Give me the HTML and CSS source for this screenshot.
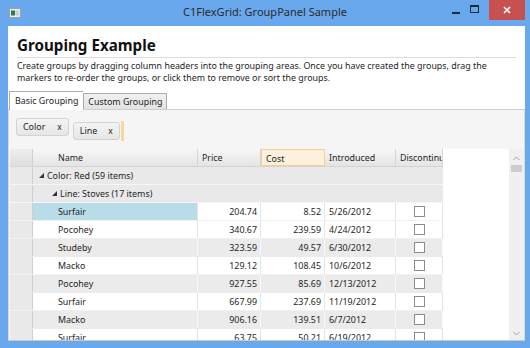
FILE: index.html
```html
<!DOCTYPE html>
<html lang="en">
<head>
<meta charset="UTF-8">
<title>C1FlexGrid: GroupPanel Sample</title>
<link rel="stylesheet" href="styles.css">
</head>
<body>
<div class="window">
    <div class="titlebar">
        <div class="tb-left">
            <svg class="app-icon" width="12" height="10" viewBox="0 0 12 10">
                <rect x="0.5" y="0.5" width="11" height="9" fill="#e9ecef" stroke="#9aa3ad"/>
                <rect x="2" y="2.5" width="4" height="5" fill="#2f7a4c"/>
                <rect x="6.5" y="2.5" width="3.5" height="5" fill="#c9ced4"/>
            </svg>
        </div>
        <div class="title">C1FlexGrid: GroupPanel Sample</div>
        <div class="caption-buttons">
            <span class="btn btn-min"><span class="dash"></span></span>
            <span class="btn btn-max"><span class="box"></span></span>
            <span class="btn btn-close">
                <svg width="8" height="8" viewBox="0 0 8 8"><path d="M1 1L7 7M7 1L1 7" stroke="#fff" stroke-width="1.6"/></svg>
            </span>
        </div>
    </div>

    <div class="client">
        <div class="intro">
            <h1>Grouping Example</h1>
            <p>Create groups by dragging column headers into the grouping areas. Once you have created the groups, drag the<br>markers to re-order the groups, or click them to remove or sort the groups.</p>
        </div>

        <div class="tabs">
            <div class="tab active">Basic Grouping</div>
            <div class="tab">Custom Grouping</div>
        </div>

        <div class="tab-panel">
            <div class="group-panel">
                <div class="chip">Color <span class="chip-x">x</span></div>
                <div class="chip lower">Line <span class="chip-x">x</span></div>
                <div class="drop-marker"></div>
            </div>

            <div class="grid-area">
                <div class="grid">
                    <div class="row head">
                        <div class="rh"></div>
                        <div class="cell name">Name</div>
                        <div class="cell">Price</div>
                        <div class="cell hot">Cost</div>
                        <div class="cell">Introduced</div>
                        <div class="cell clip">Discontinued</div>
                    </div>
                    <div class="row group">
                        <div class="rh"></div>
                        <div class="glabel lvl0"><span class="tri"></span>Color: Red (59 items)</div>
                    </div>
                    <div class="row group">
                        <div class="rh"></div>
                        <div class="glabel lvl1"><span class="tri"></span>Line: Stoves (17 items)</div>
                    </div>
                    <div class="row">
                        <div class="rh"></div>
                        <div class="cell name selected">Surfair</div>
                        <div class="cell num">204.74</div>
                        <div class="cell num">8.52</div>
                        <div class="cell">5/26/2012</div>
                        <div class="cell check"><span class="box"></span></div>
                    </div>
                    <div class="row">
                        <div class="rh"></div>
                        <div class="cell name">Pocohey</div>
                        <div class="cell num">340.67</div>
                        <div class="cell num">239.59</div>
                        <div class="cell">4/24/2012</div>
                        <div class="cell check"><span class="box"></span></div>
                    </div>
                    <div class="row alt">
                        <div class="rh"></div>
                        <div class="cell name">Studeby</div>
                        <div class="cell num">323.59</div>
                        <div class="cell num">49.57</div>
                        <div class="cell">6/30/2012</div>
                        <div class="cell check"><span class="box"></span></div>
                    </div>
                    <div class="row">
                        <div class="rh"></div>
                        <div class="cell name">Macko</div>
                        <div class="cell num">129.12</div>
                        <div class="cell num">108.45</div>
                        <div class="cell">10/6/2012</div>
                        <div class="cell check"><span class="box"></span></div>
                    </div>
                    <div class="row alt">
                        <div class="rh"></div>
                        <div class="cell name">Pocohey</div>
                        <div class="cell num">927.55</div>
                        <div class="cell num">85.69</div>
                        <div class="cell">12/13/2012</div>
                        <div class="cell check"><span class="box"></span></div>
                    </div>
                    <div class="row">
                        <div class="rh"></div>
                        <div class="cell name">Surfair</div>
                        <div class="cell num">667.99</div>
                        <div class="cell num">237.69</div>
                        <div class="cell">11/19/2012</div>
                        <div class="cell check"><span class="box"></span></div>
                    </div>
                    <div class="row alt">
                        <div class="rh"></div>
                        <div class="cell name">Macko</div>
                        <div class="cell num">906.16</div>
                        <div class="cell num">139.51</div>
                        <div class="cell">6/7/2012</div>
                        <div class="cell check"><span class="box"></span></div>
                    </div>
                    <div class="row">
                        <div class="rh"></div>
                        <div class="cell name">Surfair</div>
                        <div class="cell num">63.75</div>
                        <div class="cell num">50.21</div>
                        <div class="cell">6/19/2012</div>
                        <div class="cell check"><span class="box"></span></div>
                    </div>
                </div>
                <div class="filler"></div>
                <div class="scrollbar">
                    <svg class="arrow" width="7" height="5" viewBox="0 0 7 5"><path d="M0.5 4L3.5 1L6.5 4" fill="none" stroke="#a0a0a0"/></svg>
                    <div class="thumb"></div>
                    <div class="track"></div>
                    <svg class="arrow" width="7" height="5" viewBox="0 0 7 5"><path d="M0.5 1L3.5 4L6.5 1" fill="none" stroke="#a0a0a0"/></svg>
                </div>
            </div>
        </div>
    </div>
</div>
</body>
</html>
```

FILE: styles.css
```css
body, html {
    margin: 0;
    padding: 0;
    width: 530px;
    height: 348px;
    overflow: hidden;
    font-family: 'Noto Sans', 'Open Sans', sans-serif;
    color: #1e1e1e;
}
.window {
    display: flex;
    flex-direction: column;
    width: 530px;
    height: 348px;
    background-color: #6aa8ee;
}
/* title bar */
.titlebar {
    display: grid;
    grid-template-columns: 1fr auto 1fr;
    height: 26px;
    flex-shrink: 0;
}
.tb-left {
    padding: 8px 0 0 9px;
}
.app-icon {
    display: block;
}
.title {
    font-size: 11px;
    line-height: 24px;
    color: #2a2a2a;
}
.caption-buttons {
    display: flex;
    justify-content: flex-end;
    align-items: flex-start;
    padding-right: 5px;
}
.btn {
    display: flex;
    justify-content: center;
    align-items: center;
    height: 20px;
}
.btn-min {
    width: 18px;
}
.btn-min .dash {
    width: 8px;
    height: 2px;
    margin-top: 5px;
    background-color: #1e2a38;
}
.btn-max {
    width: 18px;
    margin-right: 6px;
}
.btn-max .box {
    width: 7px;
    height: 5px;
    margin-bottom: 3px;
    border: 1px solid #1e2a38;
    border-top-width: 2px;
}
.btn-close {
    width: 36px;
    background-color: #c75050;
}
/* client */
.client {
    flex: 1;
    display: flex;
    flex-direction: column;
    margin: 0 5px 7px 8px;
    background-color: #fff;
    min-height: 0;
}
.intro {
    padding: 9px 9px 0 9px;
}
.intro h1 {
    margin: 0;
    font-size: 15.2px;
    font-weight: bold;
    line-height: 21px;
    padding-bottom: 1px;
    border-bottom: 1px solid #dcdcdc;
    color: #111;
}
.intro p {
    margin: 2px 0 0 0;
    font-size: 8.9px;
    line-height: 12px;
    white-space: nowrap;
}
/* tabs */
.tabs {
    display: flex;
    align-items: flex-end;
    margin-top: 7px;
    padding-left: 1px;
    height: 18px;
    border-bottom: 1px solid #cfcfcf;
    flex-shrink: 0;
}
.tab {
    font-size: 8.9px;
    line-height: 15px;
    padding: 0 4px;
    border: 1px solid #acacac;
    border-bottom: none;
    background: linear-gradient(#f0f0f0, #e3e3e3);
}
.tab.active {
    background: #fff;
    line-height: 17px;
    padding: 0 5px 1px 5px;
    border-right: none;
    margin-bottom: -1px;
}
.tab-panel {
    flex: 1;
    display: flex;
    flex-direction: column;
    min-height: 0;
    background-color: #f5f5f5;
    border-left: 1px solid #d9d9d9;
    border-right: 1px solid #d9d9d9;
    border-bottom: 1px solid #c8c8c8;
}
.group-panel {
    display: flex;
    align-items: flex-start;
    gap: 4px;
    height: 39px;
    padding: 8px 0 0 7px;
    box-sizing: border-box;
    flex-shrink: 0;
}
.chip {
    display: flex;
    gap: 12px;
    font-size: 8.9px;
    line-height: 16px;
    padding: 0 6px 0 6px;
    border: 1px solid #d3d3d3;
    border-radius: 3px;
    background: linear-gradient(#f4f4f4, #e6e6e6);
}
.chip.lower {
    margin-top: 4px;
    gap: 11px;
}
.chip-x {
    font-size: 8.5px;
}
.drop-marker {
    width: 3px;
    height: 20px;
    margin: 3px 0 0 -3px;
    background-color: #f6d79d;
}
/* grid */
.grid-area {
    flex: 1;
    display: flex;
    min-height: 0;
    margin-left: 1px;
    overflow: hidden;
}
.grid {
    width: 433px;
    flex-shrink: 0;
    font-size: 8.9px;
}
.row {
    display: grid;
    grid-template-columns: 23px 165px 63px 64px 71px 47px;
    height: 18px;
    background-color: #fff;
    border-bottom: 1px solid #f1f1f1;
    box-sizing: border-box;
}
.row.alt {
    background-color: #ebebeb;
    border-bottom-color: #ebebeb;
}
.rh {
    background-color: #e9e9e9;
    border-right: 1px solid #cfcfcf;
}
.cell {
    line-height: 17px;
    padding: 0 4px;
    border-right: 1px solid #e4e4e4;
    white-space: nowrap;
    overflow: hidden;
}
.row.alt .cell {
    border-right-color: #f8f8f8;
}
.cell.name {
    padding-left: 25px;
}
.cell.num {
    text-align: right;
    padding-right: 3px;
}
.cell.selected {
    background-color: #b8dce8;
}
.cell.check {
    display: flex;
    justify-content: center;
    align-items: center;
}
.cell.check .box {
    width: 9px;
    height: 9px;
    border: 1px solid #8c8c8c;
    background-color: #fff;
}
.row.head {
    background: linear-gradient(#f7f7f7, #e4e4e4);
    border-bottom: 1px solid #d4d4d4;
}
.row.head .rh {
    background: linear-gradient(#eeeeee, #dedede);
}
.row.head .cell {
    border-right: 1px solid #d6d6d6;
}
.row.head .cell.hot {
    background: #fdf0dc;
    border: 1px solid #f3cf92;
}
.cell.clip {
    text-overflow: clip;
    padding-right: 0;
}
.row.group {
    grid-template-columns: 23px 410px;
    background-color: #e9e9e9;
    border-bottom: 1px solid #f6f6f6;
}
.glabel {
    display: flex;
    align-items: center;
    gap: 3px;
    line-height: 17px;
}
.glabel.lvl0 {
    padding-left: 6px;
}
.glabel.lvl1 {
    padding-left: 19px;
}
.tri {
    width: 0;
    height: 0;
    border-left: 5px solid transparent;
    border-bottom: 5px solid #333;
}
.filler {
    width: 66px;
    flex-shrink: 0;
    background-color: #fff;
}
.scrollbar {
    flex: 1;
    display: flex;
    flex-direction: column;
    align-items: center;
    background-color: #f0f0f0;
    padding: 7px 0 4px 0;
}
.thumb {
    width: 11px;
    height: 7px;
    margin-top: 4px;
    background-color: #cdcdcd;
}
.track {
    flex: 1;
}
```
